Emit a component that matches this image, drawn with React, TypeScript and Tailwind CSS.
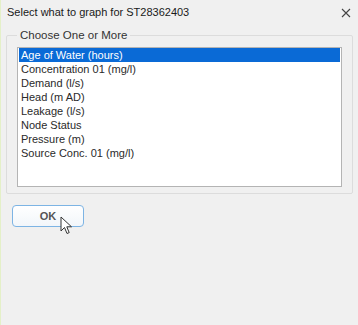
const items = [
  "Age of Water (hours)",
  "Concentration 01 (mg/l)",
  "Demand (l/s)",
  "Head (m AD)",
  "Leakage (l/s)",
  "Node Status",
  "Pressure (m)",
  "Source Conc. 01 (mg/l)",
];

const App = () => {
  return (
    <div className="w-[358px] h-[325px] bg-[#f0f0f0] text-[#1a1a1a] font-['Liberation_Sans',sans-serif] relative overflow-hidden border-l border-[#e4f0c8]">
      <div className="h-[25px] flex items-center justify-between pl-[6px] pr-[6px]">
        <p className="text-[11px]">Select what to graph for ST28362403</p>
        <svg width="10" height="10" viewBox="0 0 10 10" className="mr-[1px]">
          <path d="M1 1L9 9M9 1L1 9" stroke="#444" strokeWidth="1.1" />
        </svg>
      </div>
      <fieldset className="mx-[5px] mt-[2px] h-[167px] border border-[#dcdcdc] rounded-[2px] px-[10px] pb-[8px]">
        <legend className="ml-[0px] px-[3px] text-[11.5px] text-[#333]">Choose One or More</legend>
        <div className="mt-[3px] h-[140px] bg-white border border-[#b4b4b4] px-[1px]">
          {items.map((item, i) => (
            <div
              key={item}
              className={
                i === 0
                  ? "h-[14px] leading-[14px] text-[11px] px-[2px] bg-[#0a6ad6] text-white"
                  : "h-[14px] leading-[14px] text-[11px] px-[2px] text-[#2a2a2a]"
              }
            >
              {item}
            </div>
          ))}
        </div>
      </fieldset>
      <div className="pl-[11px] mt-[9px]">
        <button className="w-[72px] h-[22px] rounded-[4px] border border-[#7db4e4] bg-gradient-to-b from-white to-[#f2f6fa] text-[11px] font-bold text-[#555]">
          OK
        </button>
      </div>
      <svg className="absolute left-[59px] top-[216px]" width="14" height="20" viewBox="0 0 14 20">
        <path d="M1 1L1 15L4.5 11.5L7 17.5L9.2 16.6L6.8 10.8L11.5 10.8Z" fill="white" stroke="#333" strokeWidth="1" strokeLinejoin="round" />
      </svg>
    </div>
  );
};

export default App;
